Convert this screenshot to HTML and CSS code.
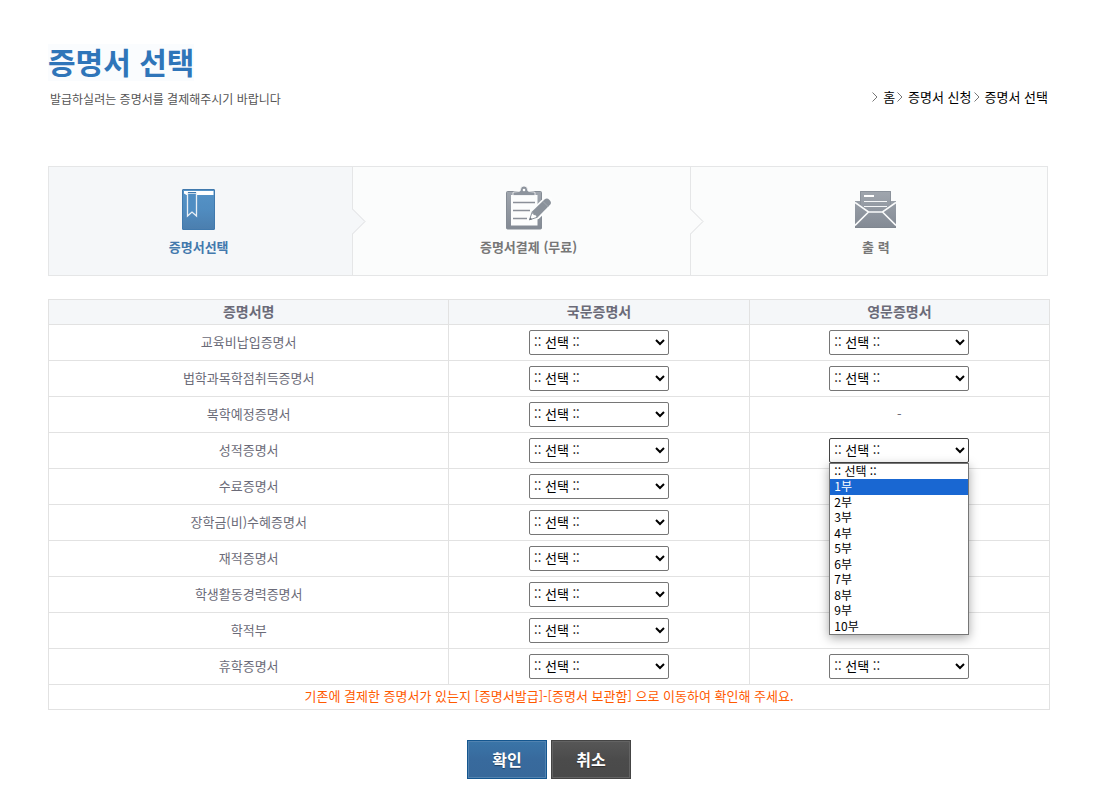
FILE: index.html
```html
<!DOCTYPE html>
<html lang="ko">
<head>
<meta charset="utf-8">
<meta name="viewport" content="width=device-width, initial-scale=1">
<title>증명서 선택</title>
<link rel="stylesheet" href="styles.css">
</head>
<body>
<main class="page">
  <header class="page-header">
    <div>
      <h1 class="title">증명서 선택</h1>
      <p class="subtitle">발급하실려는 증명서를 결제해주시기 바랍니다</p>
    </div>
    <nav class="breadcrumb" aria-label="현재 위치">
      <svg class="chevron" viewBox="0 0 6 10"><path d="M.5 .5 5 5 .5 9.5"/></svg>
      <a href="#">홈</a>
      <svg class="chevron" viewBox="0 0 6 10"><path d="M.5 .5 5 5 .5 9.5"/></svg>
      <a href="#">증명서 신청</a>
      <svg class="chevron" viewBox="0 0 6 10"><path d="M.5 .5 5 5 .5 9.5"/></svg>
      <a href="#">증명서 선택</a>
    </nav>
  </header>

  <ol class="steps">
    <li class="step step-active">
      <svg class="icon" width="33" height="41" viewBox="0 0 33 41">
        <defs><linearGradient id="blue" x2="0" y2="1"><stop offset="0" stop-color="#5593c7"/><stop offset=".5" stop-color="#508cc0"/><stop offset="1" stop-color="#4b7eae"/></linearGradient></defs>
        <rect x=".5" y=".5" width="32" height="40" rx=".5" fill="url(#blue)" stroke="#4079ad"/>
        <path d="M2 2h29.500v4H4.500L2 4.500z" fill="#fff"/>
        <path d="M5.500 4v23l4.500-4 4.500 4V4z" fill="#508ec3" stroke="#e9eff5" stroke-width="1.300"/>
        <path d="M6 3.500h8" stroke="#4079ad"/>
      </svg>
      <span class="step-label">증명서선택</span>
      <svg class="step-arrow" viewBox="0 0 14 27"><path d="M0 .5 13 13.500 0 26.500"/></svg>
    </li>
    <li class="step">
      <svg class="icon" width="46" height="44" viewBox="0 0 46 44">
        <defs><linearGradient id="gray" x2="0" y2="1"><stop offset="0" stop-color="#a0a6ae"/><stop offset="1" stop-color="#838a94"/></linearGradient></defs>
        <rect x=".5" y="5.500" width="35" height="37.500" rx="1" fill="url(#gray)" stroke="#858c95"/>
        <rect x="5" y="9" width="26.500" height="30.500" fill="#fcfdfd"/>
        <path d="M7 9.500V7q0-1 1-1l5-.5q1.500-.3 1.500-2a3.500 3.500 0 0 1 7 0q0 1.700 1.500 2l5 .5q1 0 1 1v2.500z" fill="#8d949d" stroke="#fcfdfd" stroke-width=".8"/>
        <circle cx="18" cy="4" r="1.300" fill="#fff"/>
        <path d="M7 16.500h22M7 24.500h17M7 32.500h14" stroke="#8b9099" stroke-width="1.700"/>
        <path d="m23 34.500 2.500-9L39 12.500q3-2.500 6 .5t.5 6L32 32z" fill="#fcfdfd" stroke="#fcfdfd" stroke-width="2.500"/>
        <path d="m25.500 26 13-12.500q2.500-2 5 .5t.8 4.500L31.500 31.500z" fill="#8b929b"/>
        <path d="m26 26.500-2.500 7.300 7.700-2.500-1.200-2.500-2.300-.3z" fill="#fff" stroke="#8b929b"/>
        <path d="m23.200 34.300 1-3 2 2z" fill="#6f7680"/>
        <path d="m37 15.500 5.500 5.500" stroke="#a7adb4" stroke-width=".8"/>
      </svg>
      <span class="step-label">증명서결제 (무료)</span>
      <svg class="step-arrow" viewBox="0 0 14 27"><path d="M0 .5 13 13.500 0 26.500"/></svg>
    </li>
    <li class="step">
      <svg class="icon icon-mail" width="41" height="37" viewBox="0 0 41 37">
        <path d="M0 10h5V0h31v10h5v27H0z" fill="url(#gray)"/>
        <path d="M5.500 15V.5h30V15" fill="none" stroke="#8a919a"/>
        <path d="M9 5h10" stroke="#fff" stroke-width="2"/>
        <path d="M9 10.500h23M9 15.500h23" stroke="#f5f6f7"/>
        <path d="M0 11.500 13.500 21h14L41 11.500M13.500 21 0 34.500M27.500 21 41 34.500" fill="none" stroke="#fafbfb" stroke-width="1.600"/>
        <path d="M0 36.500h41" stroke="#7f868f"/>
      </svg>
      <span class="step-label">출 력</span>
    </li>
  </ol>

  <form>
    <table class="certs">
      <colgroup><col class="col-name"><col class="col-lang"><col class="col-lang"></colgroup>
      <thead>
        <tr><th scope="col">증명서명</th><th scope="col">국문증명서</th><th scope="col">영문증명서</th></tr>
      </thead>
      <tbody>
        <tr><td class="name">교육비납입증명서</td><td><select aria-label="교육비납입증명서 국문"><option>:: 선택 ::</option></select></td><td><select aria-label="교육비납입증명서 영문"><option>:: 선택 ::</option></select></td></tr>
        <tr><td class="name">법학과목학점취득증명서</td><td><select aria-label="법학과목학점취득증명서 국문"><option>:: 선택 ::</option></select></td><td><select aria-label="법학과목학점취득증명서 영문"><option>:: 선택 ::</option></select></td></tr>
        <tr><td class="name">복학예정증명서</td><td><select aria-label="복학예정증명서 국문"><option>:: 선택 ::</option></select></td><td class="name">-</td></tr>
        <tr><td class="name">성적증명서</td><td><select aria-label="성적증명서 국문"><option>:: 선택 ::</option></select></td><td>
          <div class="dropdown">
            <select class="is-open" aria-label="성적증명서 영문"><option>:: 선택 ::</option></select>
            <ul class="menu" role="listbox" aria-label="성적증명서 영문 부수">
              <li role="option">:: 선택 ::</li>
              <li role="option" class="is-current" aria-selected="true">1부</li>
              <li role="option">2부</li>
              <li role="option">3부</li>
              <li role="option">4부</li>
              <li role="option">5부</li>
              <li role="option">6부</li>
              <li role="option">7부</li>
              <li role="option">8부</li>
              <li role="option">9부</li>
              <li role="option">10부</li>
            </ul>
          </div>
        </td></tr>
        <tr><td class="name">수료증명서</td><td><select aria-label="수료증명서 국문"><option>:: 선택 ::</option></select></td><td></td></tr>
        <tr><td class="name">장학금(비)수혜증명서</td><td><select aria-label="장학금(비)수혜증명서 국문"><option>:: 선택 ::</option></select></td><td></td></tr>
        <tr><td class="name">재적증명서</td><td><select aria-label="재적증명서 국문"><option>:: 선택 ::</option></select></td><td></td></tr>
        <tr><td class="name">학생활동경력증명서</td><td><select aria-label="학생활동경력증명서 국문"><option>:: 선택 ::</option></select></td><td></td></tr>
        <tr><td class="name">학적부</td><td><select aria-label="학적부 국문"><option>:: 선택 ::</option></select></td><td></td></tr>
        <tr><td class="name">휴학증명서</td><td><select aria-label="휴학증명서 국문"><option>:: 선택 ::</option></select></td><td><select aria-label="휴학증명서 영문"><option>:: 선택 ::</option></select></td></tr>
      </tbody>
      <tfoot>
        <tr><td class="notice" colspan="3">기존에 결제한 증명서가 있는지 [증명서발급]-[증명서 보관함] 으로 이동하여 확인해 주세요.</td></tr>
      </tfoot>
    </table>
    <div class="actions">
      <button class="btn btn-primary" type="submit">확인</button>
      <button class="btn btn-cancel" type="button">취소</button>
    </div>
  </form>
</main>
</body>
</html>
```
FILE: styles.css
```css
* { box-sizing: border-box; }

body {
  margin: 0;
  background: #fff;
  color: #000;
  font: 13px/16px "Noto Sans CJK KR", sans-serif;
}

.page { padding: 44px 46px 28px 48px; }

.page-header {
  display: flex;
  justify-content: space-between;
  align-items: flex-end;
  margin-right: 2px;
}

.title {
  margin: 0;
  padding-bottom: 2px;
  background: #fafcfe;
  color: #2f75b9;
  font-size: 30px;
  line-height: 35px;
  font-weight: 700;
  width: fit-content;
}

.subtitle {
  margin: 8px 0 0 2px;
  color: #555;
  font-size: 12px;
  line-height: 20px;
}

.breadcrumb {
  display: flex;
  align-items: center;
  padding-bottom: 4px;
}

.breadcrumb a {
  margin-left: 5px;
  color: #000;
  text-decoration: none;
}

.chevron {
  width: 6px;
  height: 10px;
  margin-left: 2px;
  fill: none;
  stroke: #777;
}

.steps {
  display: grid;
  grid-template-columns: 304fr 338fr 358fr;
  margin: 57px 2px 23px 0;
  padding: 0;
  list-style: none;
  border: 1px solid #e5e6e7;
}

.step {
  position: relative;
  display: flex;
  flex-direction: column;
  align-items: center;
  height: 108px;
  padding: 0 0 20px 14px;
  background: #fbfcfc;
  color: #777;
}

.step + .step { border-left: 1px solid #e5e6e7; }

.step-active {
  padding-left: 0;
  padding-right: 4px;
  background: #f5f7f9;
  color: #4379ad;
}

.icon { margin-top: auto; }
.icon-mail { margin-bottom: 2px; }

.step-label {
  margin-top: 9px;
  font-weight: 700;
}

.step-arrow {
  position: absolute;
  z-index: 1;
  top: 41px;
  right: -14px;
  width: 14px;
  height: 27px;
  fill: #fbfcfc;
  stroke: #dcdddf;
}

.step-active .step-arrow { fill: #f5f7f9; }

.certs {
  width: 100%;
  table-layout: fixed;
  border-collapse: collapse;
  color: #6b6b78;
  text-align: center;
}

.col-name { width: 40%; }
.col-lang { width: 30%; }

.certs th,
.certs td {
  height: 36px;
  padding: 0;
  border: 1px solid #e2e2e2;
}

.certs .name { padding-bottom: 2px; }

.certs th {
  height: 25px;
  padding-bottom: 2px;
  background: #f5f7f9;
  font-size: 14px;
  font-weight: 700;
}

.certs .notice {
  height: 25px;
  padding-bottom: 2px;
  color: #ff5a00;
}

select {
  display: block;
  width: 140px;
  height: 25px;
  margin: 0 auto;
  padding-bottom: 2px;
  border: 1px solid #767676;
  border-radius: 2px;
  background: #fff;
  color: #000;
  font: 13px/16px "Noto Sans CJK KR", sans-serif;
}

.is-open { border-color: #444; }

.dropdown {
  position: relative;
  width: 140px;
  margin: 0 auto;
}

.menu {
  position: absolute;
  z-index: 2;
  top: 100%;
  left: 0;
  display: grid;
  grid-template-rows: repeat(11, 1fr);
  width: 100%;
  height: 172px;
  margin: 0;
  padding: 0;
  list-style: none;
  border: 1px solid #767676;
  background: #fff;
  color: #000;
  text-align: left;
  font-size: 12px;
  line-height: 13px;
  box-shadow: 0 3px 10px rgba(0, 0, 0, .35);
}

.menu li { padding-left: 4px; min-height: 0; }

.menu .is-current { background: #1967d2; color: #fff; }

.actions {
  display: flex;
  justify-content: center;
  gap: 4px;
  margin-top: 30px;
}

.btn {
  width: 80px;
  height: 39px;
  padding: 0 0 2px;
  color: #fff;
  font: 700 16px/20px "Noto Sans CJK KR", sans-serif;
  text-shadow: 0 1px 1px rgba(0, 0, 0, .4);
}

.btn-primary {
  border: 1px solid #14568f;
  background: linear-gradient(#3a75a8, #386a9d 50%, #37689a);
  box-shadow: inset 0 0 0 1px #5283b0;
}

.btn-cancel {
  border: 1px solid #444;
  background: linear-gradient(#575757, #4b4b4b 50%, #494949);
  box-shadow: inset 0 0 0 1px #636363;
}
```
